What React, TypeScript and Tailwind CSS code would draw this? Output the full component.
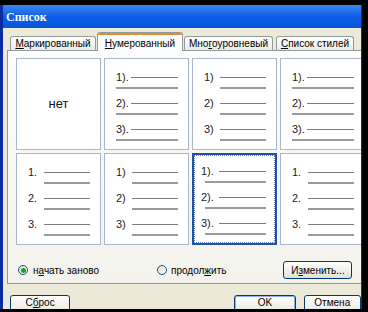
import React from "react";

type Kind = "a" | "b" | "sel";

interface Cell {
    kind: Kind;
    labels: string[];
}

// class sets for each kind of sample, written out in full
const styles: Record<Kind, { box: string; inner: string; num: string; line2: string }> = {
    a: {
        box: "border border-[#a9b6c9] bg-white",
        inner: "pt-[12px] pr-[10px]",
        num: "pl-[11px] w-[26px]",
        line2: "ml-[11px]",
    },
    b: {
        box: "border border-[#a9b6c9] bg-white",
        inner: "pt-[12px] pr-[10px]",
        num: "pl-[11px] w-[27px]",
        line2: "ml-[27px]",
    },
    sel: {
        box: "border-2 border-[#2150a8] bg-white",
        inner: "h-full border border-dotted border-[#6c86c4] pt-[9px] pr-[8px]",
        num: "pl-[6px] w-[24px]",
        line2: "ml-[10px]",
    },
};

const cells: (Cell | null)[] = [
    null,
    { kind: "a", labels: ["1).", "2).", "3)."] },
    { kind: "b", labels: ["1)", "2)", "3)"] },
    { kind: "a", labels: ["1).", "2).", "3)."] },
    { kind: "b", labels: ["1.", "2.", "3."] },
    { kind: "b", labels: ["1)", "2)", "3)"] },
    { kind: "sel", labels: ["1).", "2).", "3)."] },
    { kind: "b", labels: ["1.", "2.", "3."] },
];

function ListCell({ cell }: { cell: Cell | null }) {
    if (!cell) {
        return (
            <div className="border border-[#a9b6c9] bg-white flex items-center justify-center">
                <span className="text-[13px] text-[#111]">нет</span>
            </div>
        );
    }
    const s = styles[cell.kind];
    return (
        <div className={s.box}>
            <div className={`flex flex-col gap-[8px] ${s.inner}`}>
                {cell.labels.map(label => (
                    <div key={label} className="flex flex-col">
                        <div className="flex items-center h-[12px]">
                            <span className={`text-[11px] leading-none text-[#222] shrink-0 ${s.num}`}>{label}</span>
                            <div className="flex-1 h-[1px] bg-[#7d7d7d]" />
                        </div>
                        <div className={`mt-[4px] h-[2px] bg-[#9b9b9b] ${s.line2}`} />
                    </div>
                ))}
            </div>
        </div>
    );
}

function Tab({ children, active, className }: { children: React.ReactNode; active?: boolean; className: string }) {
    if (active) {
        return (
            <div className={`h-[19px] border border-b-0 border-[#919b9c] rounded-t-[3px] bg-[#fcfcfe] flex flex-col overflow-hidden ${className}`}>
                <div className="h-[2px] bg-[#e68b2c]" />
                <div className="flex-1 flex items-center justify-center text-[10px] text-black whitespace-nowrap">{children}</div>
            </div>
        );
    }
    return (
        <div className={`h-[14px] mb-[1px] border border-b-0 border-[#919b9c] rounded-t-[3px] bg-gradient-to-b from-white to-[#ecebe5] flex items-center justify-center text-[10px] text-black whitespace-nowrap ${className}`}>
            {children}
        </div>
    );
}

function Radio({ checked }: { checked?: boolean }) {
    return (
        <span className="w-[10px] h-[10px] rounded-full border border-[#1c5180] bg-gradient-to-br from-[#dcdcd6] to-white flex items-center justify-center shrink-0">
            {checked && <span className="w-[5px] h-[5px] rounded-full bg-[#21a121]" />}
        </span>
    );
}

function Btn({ children, className, def }: { children: React.ReactNode; className: string; def?: boolean }) {
    return (
        <div
            className={`border border-[#003c74] rounded-[3px] bg-gradient-to-b from-white to-[#e3e1d6] flex justify-center text-[10px] text-black ${def ? "shadow-[inset_0_0_0_1px_#8fb0ee]" : ""} ${className}`}
        >
            {children}
        </div>
    );
}

export default function App() {
    return (
        <div className="w-[368px] h-[312px] bg-black pt-[5px] pr-[6px] pb-[3px] overflow-hidden" style={{ fontFamily: '"Liberation Sans", Arial, sans-serif' }}>
            <div className="h-full flex flex-col border-l-[3px] border-r border-[#0a2c9e] overflow-hidden">
                {/* Title bar */}
                <div className="h-[23px] shrink-0 bg-gradient-to-b from-[#3d85f2] via-[#0c5ee8] to-[#0754dc] flex items-center pl-[3px]">
                    <span className="text-white font-bold text-[12px]" style={{ fontFamily: '"Liberation Serif", serif' }}>Список</span>
                </div>

                {/* Body */}
                <div className="flex-1 bg-[#ece9d8] flex flex-col overflow-hidden">
                    <div className="flex items-end h-[19px] mt-[4px] pl-[7px] relative z-10 shrink-0">
                        <Tab className="w-[86px]"><u>М</u>аркированный</Tab>
                        <Tab active className="w-[86px] ml-[1px]"><u>Н</u>умерованный</Tab>
                        <Tab className="w-[89px] ml-[1px]">Мно<u>г</u>оуровневый</Tab>
                        <Tab className="w-[78px] ml-[3px]"><u>С</u>писок стилей</Tab>
                    </div>

                    {/* Tab panel */}
                    <div className="-mt-px ml-[4px] w-[362px] h-[234px] shrink-0 border border-[#919b9c] bg-gradient-to-b from-[#fdfdfd] to-[#f3f2ec] flex flex-col">
                        <div className="grid grid-cols-[85px_85px_85px_85px] grid-rows-[92px_92px] gap-[3px] pt-[7px] pl-[8px]">
                            {cells.map((c, i) => (
                                <ListCell key={i} cell={c} />
                            ))}
                        </div>

                        <div className="flex items-center h-[18px] mt-[16px] pl-[10px]">
                            <Radio checked />
                            <span className="ml-[5px] text-[10px] text-black">н<u>а</u>чать заново</span>
                            <div className="ml-[58px] flex items-center">
                                <Radio />
                                <span className="ml-[4px] text-[10px] text-black">продол<u>ж</u>ить</span>
                            </div>
                            <Btn className="ml-[57px] w-[69px] h-[18px] items-center">И<u>з</u>менить...</Btn>
                        </div>
                    </div>

                    {/* Bottom buttons */}
                    <div className="flex mt-[11px] pl-[7px] shrink-0">
                        <Btn className="w-[63px] h-[21px] items-start pt-[2px] leading-none">С<u>б</u>рос</Btn>
                        <Btn def className="ml-[164px] w-[64px] h-[21px] items-start pt-[2px] leading-none">OK</Btn>
                        <Btn className="ml-[8px] w-[60px] h-[21px] items-start pt-[2px] leading-none">Отмена</Btn>
                    </div>
                </div>
            </div>
        </div>
    );
}
